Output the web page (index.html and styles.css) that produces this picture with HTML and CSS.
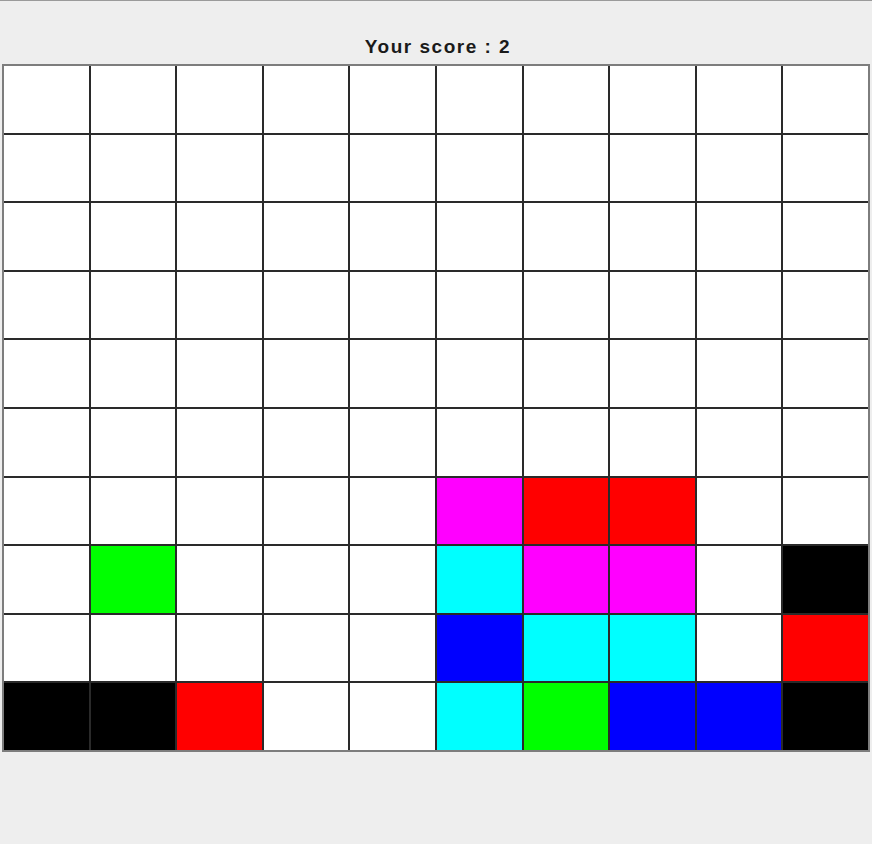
FILE: index.html
```html
<!DOCTYPE html>
<html>
<head>
<meta charset="utf-8">
<link rel="stylesheet" href="styles.css">
</head>
<body>
<div class="topline"></div>
<div class="title">Your score : 2</div>
<div class="board">
<div class="c"></div><div class="c"></div><div class="c"></div><div class="c"></div><div class="c"></div><div class="c"></div><div class="c"></div><div class="c"></div><div class="c"></div><div class="c"></div>
<div class="c"></div><div class="c"></div><div class="c"></div><div class="c"></div><div class="c"></div><div class="c"></div><div class="c"></div><div class="c"></div><div class="c"></div><div class="c"></div>
<div class="c"></div><div class="c"></div><div class="c"></div><div class="c"></div><div class="c"></div><div class="c"></div><div class="c"></div><div class="c"></div><div class="c"></div><div class="c"></div>
<div class="c"></div><div class="c"></div><div class="c"></div><div class="c"></div><div class="c"></div><div class="c"></div><div class="c"></div><div class="c"></div><div class="c"></div><div class="c"></div>
<div class="c"></div><div class="c"></div><div class="c"></div><div class="c"></div><div class="c"></div><div class="c"></div><div class="c"></div><div class="c"></div><div class="c"></div><div class="c"></div>
<div class="c"></div><div class="c"></div><div class="c"></div><div class="c"></div><div class="c"></div><div class="c"></div><div class="c"></div><div class="c"></div><div class="c"></div><div class="c"></div>
<div class="c"></div><div class="c"></div><div class="c"></div><div class="c"></div><div class="c"></div><div class="c magenta"></div><div class="c red"></div><div class="c red"></div><div class="c"></div><div class="c"></div>
<div class="c"></div><div class="c green"></div><div class="c"></div><div class="c"></div><div class="c"></div><div class="c cyan"></div><div class="c magenta"></div><div class="c magenta"></div><div class="c"></div><div class="c black"></div>
<div class="c"></div><div class="c"></div><div class="c"></div><div class="c"></div><div class="c"></div><div class="c blue"></div><div class="c cyan"></div><div class="c cyan"></div><div class="c"></div><div class="c red"></div>
<div class="c black"></div><div class="c black"></div><div class="c red"></div><div class="c"></div><div class="c"></div><div class="c cyan"></div><div class="c green"></div><div class="c blue"></div><div class="c blue"></div><div class="c black"></div>
</div>
</body>
</html>
```
FILE: styles.css
```css
html, body {
  margin: 0;
  padding: 0;
  background: #eeeeee;
  width: 872px;
  height: 844px;
  overflow: hidden;
}
.topline {
  height: 1px;
  background: #9a9a9a;
}
.title {
  height: 63px;
  box-sizing: border-box;
  display: flex;
  align-items: flex-end;
  justify-content: center;
  padding-bottom: 6px;
  padding-left: 4px;
  font-family: "Liberation Sans", Arial, sans-serif;
  font-weight: bold;
  font-size: 19px;
  line-height: 22px;
  letter-spacing: 1.5px;
  color: #1a1a1a;
}
.board {
  margin-left: 2px;
  width: 868px;
  height: 688px;
  box-sizing: border-box;
  border: 2px solid #7d7d7d;
  background: #2a2a2a;
  display: grid;
  grid-template-columns: repeat(10, 1fr);
  grid-template-rows: repeat(10, 1fr);
  gap: 2px;
}
.c { background: #ffffff; }
.magenta { background: #ff00ff; }
.red { background: #ff0000; }
.green { background: #00ff00; }
.cyan { background: #00ffff; }
.blue { background: #0000ff; }
.black { background: #000000; }
```
